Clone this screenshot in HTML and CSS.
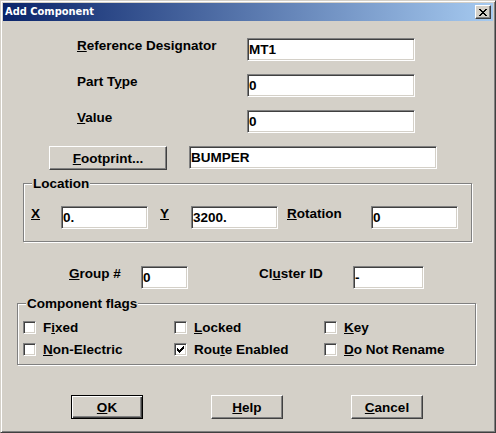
FILE: index.html
```html
<!DOCTYPE html>
<html>
<head>
<meta charset="utf-8">
<title>Add Component</title>
<link rel="stylesheet" href="styles.css">
</head>
<body>
<div class="window">
  <div class="titlebar">
    <span class="title">Add Component</span>
    <span class="close"><svg width="8" height="7" viewBox="0 0 8 7" shape-rendering="crispEdges"><path fill="#000" d="M0 0h2v1h-2z M6 0h2v1h-2z M1 1h2v1h-2z M5 1h2v1h-2z M2 2h4v1h-4z M3 3h2v1h-2z M2 4h4v1h-4z M1 5h2v1h-2z M5 5h2v1h-2z M0 6h2v1h-2z M6 6h2v1h-2z"/></svg></span>
  </div>
  <div class="content">
    <div class="row main-row first">
      <label class="lbl w-main"><u>R</u>eference Designator</label>
      <input class="field f-main" value="MT1">
    </div>
    <div class="row main-row">
      <label class="lbl w-main">Part T<u>y</u>pe</label>
      <input class="field f-main" value="0">
    </div>
    <div class="row main-row">
      <label class="lbl w-main"><u>V</u>alue</label>
      <input class="field f-main" value="0">
    </div>
    <div class="row foot-row">
      <button class="btn btn-foot"><u>F</u>ootprint...</button>
      <input class="field f-foot" value="BUMPER">
    </div>
    <fieldset class="group loc">
      <legend>Location</legend>
      <div class="row loc-row">
        <label class="lbl w-x"><u>X</u></label>
        <input class="field f-loc" value="0.">
        <label class="lbl w-y"><u>Y</u></label>
        <input class="field f-loc" value="3200.">
        <label class="lbl w-rot"><u>R</u>otation</label>
        <input class="field f-loc" value="0">
      </div>
    </fieldset>
    <div class="row grp-row">
      <label class="lbl w-grp"><u>G</u>roup #</label>
      <input class="field f-grp" value="0">
      <label class="lbl w-cl">Cl<u>u</u>ster ID</label>
      <input class="field f-cl" value="-">
    </div>
    <fieldset class="group flags">
      <legend>Component flags</legend>
      <div class="checks">
        <div class="chk"><span class="box"></span><span>F<u>i</u>xed</span></div>
        <div class="chk"><span class="box"></span><span><u>L</u>ocked</span></div>
        <div class="chk"><span class="box"></span><span><u>K</u>ey</span></div>
        <div class="chk"><span class="box"></span><span><u>N</u>on-Electric</span></div>
        <div class="chk"><span class="box"><svg width="11" height="11" viewBox="0 0 11 11" shape-rendering="crispEdges"><path fill="#000" d="M2 4h1v3h-1z M3 5h1v3h-1z M4 6h1v3h-1z M5 5h1v3h-1z M6 4h1v3h-1z M7 3h1v3h-1z M8 2h1v3h-1z"/></svg></span><span>Rou<u>t</u>e Enabled</span></div>
        <div class="chk"><span class="box"></span><span><u>D</u>o Not Rename</span></div>
      </div>
    </fieldset>
    <div class="buttons">
      <button class="btn btn-dlg btn-default"><u>O</u>K</button>
      <button class="btn btn-dlg"><u>H</u>elp</button>
      <button class="btn btn-dlg"><u>C</u>ancel</button>
    </div>
  </div>
</div>
</body>
</html>
```
FILE: styles.css
```css
html, body {
  margin: 0;
  padding: 0;
  background: #d4d0c8;
}
body {
  font: bold 13.5px "Liberation Sans", Arial, sans-serif;
  color: #000;
}
.window {
  width: 496px;
  height: 433px;
  box-sizing: border-box;
  border: 1px solid;
  border-color: #d4d0c8 #404040 #404040 #d4d0c8;
  box-shadow: inset 1px 1px #fff, inset -1px -1px #808080;
  padding: 2px;
  background: #d4d0c8;
}
.titlebar {
  height: 18px;
  background: linear-gradient(to right, #0a246a, #a6caf0);
  display: flex;
  align-items: center;
  padding: 0 2px;
}
.title {
  flex: 1;
  color: #fff;
  font: bold 11px "DejaVu Sans Condensed", "DejaVu Sans", sans-serif;
  font-stretch: condensed;
  line-height: 18px;
  white-space: nowrap;
}
.close {
  width: 16px;
  height: 14px;
  box-sizing: border-box;
  background: #d4d0c8;
  border: 1px solid;
  border-color: #fff #404040 #404040 #fff;
  box-shadow: inset -1px -1px #808080;
  display: flex;
  align-items: flex-start;
  padding: 3px 0 0 3px;
}
.close svg { display: block; }
.content {
  padding-top: 17px;
}
.row {
  display: flex;
  align-items: flex-start;
}
.lbl {
  line-height: 15px;
  white-space: nowrap;
  flex: none;
}
.field {
  height: 23px;
  box-sizing: border-box;
  border: 1px solid;
  border-color: #808080 #fff #fff #808080;
  box-shadow: inset 1px 1px #404040, inset -1px -1px #d4d0c8;
  background: #fff;
  font: inherit;
  color: #000;
  padding: 0 1px;
  margin: 0;
  outline: none;
  flex: none;
}
.main-row {
  padding-left: 74px;
  margin-top: 13px;
}
.main-row.first { margin-top: 0; }
.w-main { width: 170px; }
.f-main { width: 168px; }

.btn {
  font: inherit;
  color: #000;
  height: 24px;
  box-sizing: border-box;
  background: #d4d0c8;
  border: 1px solid;
  border-color: #fff #404040 #404040 #fff;
  box-shadow: inset -1px -1px #808080;
  padding: 0;
  margin: 0;
  line-height: 15px;
  flex: none;
}
.foot-row {
  margin-top: 13px;
  padding-left: 46px;
}
.btn-foot { width: 118px; }
.f-foot { width: 248px; margin-left: 22px; }

.group {
  box-sizing: border-box;
  border: 1px solid #808080;
  box-shadow: inset 1px 1px #fff, 1px 1px #fff;
  padding: 0;
  min-width: 0;
  margin: 0;
}
.group legend {
  padding: 0 1px;
  margin-left: 8px;
  line-height: 15px;
  background: #d4d0c8;
}
.loc {
  width: 449px;
  margin: 6px 0 0 20px;
  padding: 15px 0 12px 0;
}
.loc-row { padding-left: 7px; }
.w-x { width: 30px; }
.w-y { width: 31px; margin-left: 12px; }
.w-rot { width: 84px; margin-left: 9px; }
.f-loc { width: 87px; }

.grp-row {
  margin-top: 24px;
  padding-left: 66px;
}
.w-grp { width: 72px; }
.f-grp { width: 47px; }
.w-cl { width: 94px; margin-left: 71px; }
.f-cl { width: 71px; }

.flags {
  width: 459px;
  margin: 7px 0 0 14px;
  padding: 9px 0 7px 0;
}
.checks {
  display: grid;
  grid-template-columns: 151px 150px auto;
  grid-auto-rows: 15px;
  row-gap: 7px;
  padding-left: 5px;
}
.chk {
  display: flex;
  align-items: center;
  height: 15px;
  line-height: 15px;
  white-space: nowrap;
}
.box {
  width: 13px;
  height: 13px;
  box-sizing: border-box;
  border: 1px solid;
  border-color: #808080 #fff #fff #808080;
  box-shadow: inset 1px 1px #404040, inset -1px -1px #d4d0c8;
  background: #fff;
  margin-right: 7px;
  flex: none;
}
.box svg { display: block; }

.buttons {
  display: flex;
  gap: 68px;
  margin-top: 30px;
  padding-left: 68px;
}
.btn-dlg { width: 72px; }
.btn-default {
  border: 1px solid #000;
  box-shadow: inset 1px 1px #fff, inset -1px -1px #404040, inset -2px -2px #808080;
}
```
